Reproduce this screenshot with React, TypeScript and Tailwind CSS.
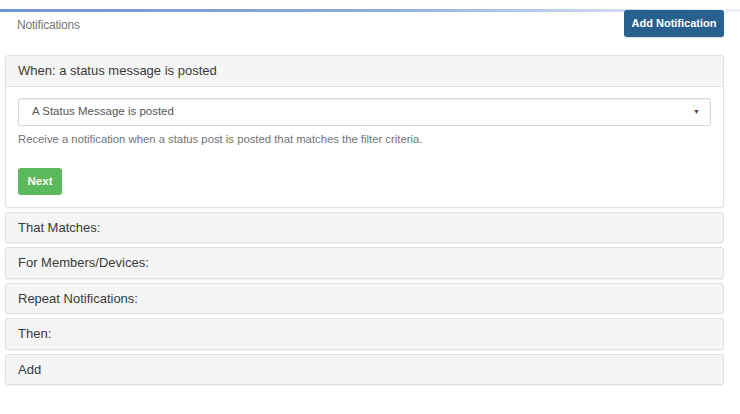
const sections = ['That Matches:', 'For Members/Devices:', 'Repeat Notifications:', 'Then:', 'Add']

export default function App() {
  return (
    <div className="w-[740px] h-[414px] bg-white overflow-hidden font-['Liberation_Sans',Arial,sans-serif] text-[#333]">
      <div className="h-[9px] bg-[#fffffb]" />
      <div className="h-[3px] bg-gradient-to-r from-[#6f95d3] via-[#8eaadb] to-[#eef2f8]" />

      <div className="flex items-start justify-between pl-[17px] pr-[16px]">
        <span className="mt-[4px] text-[12px] text-[#777] tracking-[-0.2px]">Notifications</span>
        <button className="-mt-[2px] h-[27px] w-[100px] rounded-[3px] bg-[#286090] text-white text-[11px] font-bold shadow-[0_1px_1px_rgba(0,0,0,0.15)]">
          Add Notification
        </button>
      </div>

      <div className="mt-[18px] mx-[5px] w-[719px] flex flex-col gap-[4px]">
        <div className="border border-[#e0e0e0] rounded-[3px] shadow-[0_1px_1px_rgba(0,0,0,0.05)]">
          <div className="h-[31px] bg-[#f5f5f5] border-b border-[#e3e3e3] flex items-center px-[12px] text-[13px] text-[#3a3a3a]">
            When: a status message is posted
          </div>
          <div className="px-[12px] pt-[10px] pb-[12px]">
            <div className="mt-[1px] h-[28px] border border-[#d6d6d6] rounded-[3px] flex items-center justify-between pl-[13px] pr-[10px] text-[11.5px] text-[#555] shadow-[inset_0_1px_1px_rgba(0,0,0,0.06)]">
              <span>A Status Message is posted</span>
              <span className="text-[7px] text-[#444]">▼</span>
            </div>
            <p className="mt-[5px] text-[11.3px] text-[#737373]">
              Receive a notification when a status post is posted that matches the filter criteria.
            </p>
            <button className="mt-[20px] h-[27px] w-[44px] rounded-[3px] bg-[#5cb85c] text-white text-[11.5px] font-bold">
              Next
            </button>
          </div>
        </div>

        {sections.map((title) => (
          <div
            key={title}
            className="h-[31.5px] bg-[#f5f5f5] border border-[#e0e0e0] rounded-[3px] flex items-center px-[12px] text-[13px] text-[#3a3a3a] shadow-[0_1px_1px_rgba(0,0,0,0.05)]"
          >
            {title}
          </div>
        ))}
      </div>
    </div>
  )
}
